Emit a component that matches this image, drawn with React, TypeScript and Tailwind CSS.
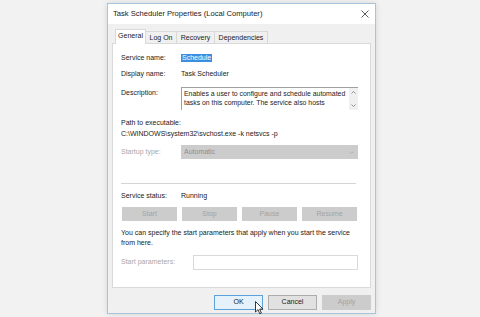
import React from "react";

const label = "w-[60px] shrink-0";

function Btn({ children, disabled }: { children: React.ReactNode; disabled?: boolean }) {
  return (
    <div
      className={
        "w-[55px] h-[14px] flex items-center justify-center border " +
        (disabled ? "bg-[#cccccc] border-[#cccccc] text-[#a3a3a3]" : "bg-[#e1e1e1] border-[#adadad] text-[#222]")
      }
    >
      {children}
    </div>
  );
}

function Cursor() {
  return (
    <svg width="9" height="14" viewBox="0 0 9 14" className="absolute left-[255px] top-[301px]">
      <path d="M0.5 0.5 L0.5 11 L3 8.6 L4.8 12.8 L6.4 12.1 L4.7 8.1 L8 8.1 Z" fill="#fff" stroke="#222" strokeWidth="0.9" strokeLinejoin="round" />
    </svg>
  );
}

export default function App() {
  return (
    <div className="relative w-[480px] h-[317px] overflow-hidden bg-[#f2f2f2] pt-[3px] pl-[107px] font-['Liberation_Sans',Arial,sans-serif] text-[7px] text-[#222]">
      <div className="w-[269px] h-[311px] flex flex-col border border-[#a9c3dd] bg-[#f0f0f0] shadow-[0_0_6px_rgba(0,0,0,0.12)]">
        {/* Title bar */}
        <div className="h-[20px] shrink-0 bg-white flex items-center justify-between pl-[5px] pr-[6px]">
          <span className="text-[7.6px] text-[#1a1a1a]">Task Scheduler Properties (Local Computer)</span>
          <svg width="8" height="8" viewBox="0 0 8 8">
            <path d="M0.5 0.5 L7.5 7.5 M7.5 0.5 L0.5 7.5" stroke="#333" strokeWidth="0.8" />
          </svg>
        </div>

        {/* Tabs */}
        <div className="mt-[5px] h-[15px] flex items-end pl-[7px] shrink-0">
          <div className="relative z-10 h-[15px] w-[31px] bg-white border border-b-0 border-[#d9d9d9] flex items-center justify-center pb-[1px]">
            General
          </div>
          <div className="h-[13px] px-[3px] w-[31px] border-t border-r border-[#d9d9d9] flex items-center justify-center">Log On</div>
          <div className="h-[13px] w-[38px] border-t border-r border-[#d9d9d9] flex items-center justify-center">Recovery</div>
          <div className="h-[13px] w-[53px] border-t border-r border-[#d9d9d9] flex items-center justify-center">Dependencies</div>
        </div>

        {/* Panel */}
        <div className="-mt-[1px] mx-[4px] h-[245px] shrink-0 bg-white border border-[#d9d9d9] pl-[8px] pr-[12px] pt-[8px] flex flex-col">
          <div className="h-[12px] flex items-center">
            <span className={label}>Service name:</span>
            <span className="bg-[#3b8ee0] text-white px-[1px] leading-[8px]">Schedule</span>
          </div>
          <div className="mt-[4px] h-[12px] flex items-center">
            <span className={label}>Display name:</span>
            <span>Task Scheduler</span>
          </div>
          <div className="mt-[7px] flex">
            <span className={label + " leading-[12px]"}>Description:</span>
            <div className="flex-1 h-[23px] border-t border-l border-[#a0a0a0] flex">
              <div className="flex-1 pl-[2px] pt-[1px] leading-[9px] text-[6.9px]">
                Enables a user to configure and schedule automated
                <br />
                tasks on this computer. The service also hosts
              </div>
              <div className="w-[9px] bg-[#f0f0f0] flex flex-col items-center justify-between py-[3px]">
                <svg width="5" height="3" viewBox="0 0 5 3">
                  <path d="M0.5 2.5 L2.5 0.5 L4.5 2.5" fill="none" stroke="#777" strokeWidth="0.8" />
                </svg>
                <svg width="5" height="3" viewBox="0 0 5 3">
                  <path d="M0.5 0.5 L2.5 2.5 L4.5 0.5" fill="none" stroke="#777" strokeWidth="0.8" />
                </svg>
              </div>
            </div>
          </div>
          <div className="mt-[7px] leading-[11px]">Path to executable:</div>
          <div className="leading-[11px]">C:\WINDOWS\system32\svchost.exe -k netsvcs -p</div>
          <div className="mt-[6px] h-[14px] flex items-center">
            <span className={label + " text-[#a8a8a8]"}>Startup type:</span>
            <div className="flex-1 h-[14px] bg-[#cccccc] flex items-center justify-between pl-[3px] pr-[4px] text-[#8c8c8c]">
              <span>Automatic</span>
              <svg width="5" height="3" viewBox="0 0 5 3">
                <path d="M0.5 0.5 L2.5 2.5 L4.5 0.5" fill="none" stroke="#aaa" strokeWidth="0.8" />
              </svg>
            </div>
          </div>
          <div className="mt-[24px] h-px bg-[#d4d4d4] mr-[2px]" />
          <div className="mt-[6px] h-[12px] flex items-center">
            <span className={label}>Service status:</span>
            <span>Running</span>
          </div>
          <div className="mt-[5px] ml-[1px] flex gap-[5px]">
            <Btn disabled>Start</Btn>
            <Btn disabled>Stop</Btn>
            <Btn disabled>Pause</Btn>
            <Btn disabled>Resume</Btn>
          </div>
          <div className="mt-[7px] leading-[9.5px]">
            You can specify the start parameters that apply when you start the service
            <br />
            from here.
          </div>
          <div className="mt-[8px] h-[15px] flex items-center">
            <span className="w-[72px] shrink-0 text-[#a8a8a8]">Start parameters:</span>
            <div className="flex-1 h-[15px] border border-[#d9d9d9] bg-white" />
          </div>
        </div>

        {/* Bottom buttons */}
        <div className="mt-[7px] flex justify-end gap-[5px] pr-[4px]">
          <div className="w-[49px] h-[15px] flex items-center justify-center bg-[#e5f1fb] border border-[#5ea0d8]">OK</div>
          <div className="w-[49px] h-[15px] flex items-center justify-center bg-[#e1e1e1] border border-[#adadad]">Cancel</div>
          <div className="w-[49px] h-[15px] flex items-center justify-center bg-[#cccccc] border border-[#cccccc] text-[#a3a3a3]">Apply</div>
        </div>
      </div>
      <Cursor />
    </div>
  );
}
